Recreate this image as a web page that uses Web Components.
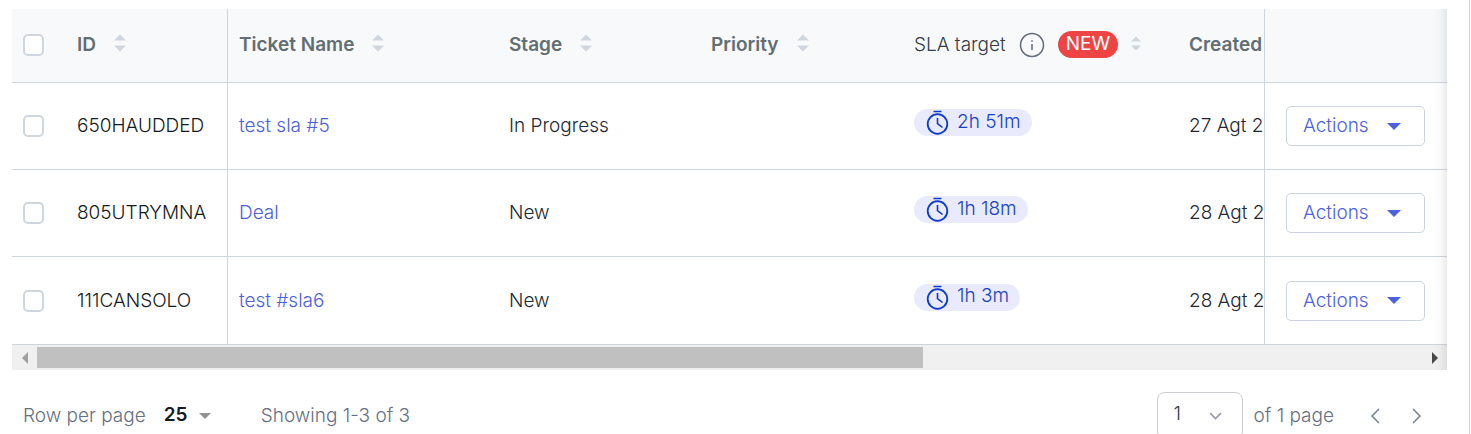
<!DOCTYPE html>
<html lang="en">
<head>
<meta charset="utf-8">
<title>Tickets</title>
<style>
  body {
    margin: 0;
    background: #fff;
    color: #232933;
    font: 300 19px/24px Inter, "Liberation Sans", sans-serif;
    overflow: hidden;
  }
</style>
</head>
<body>
<ticket-panel>
  <ticket-table></ticket-table>
  <scroll-track></scroll-track>
  <table-pager slot="footer"></table-pager>
</ticket-panel>

<script>
const define = (name, html, setup) => {
  const template = document.createElement('template');
  template.innerHTML = html;
  customElements.define(name, class extends HTMLElement {
    constructor() {
      super();
      this.attachShadow({ mode: 'open' }).append(template.content.cloneNode(true));
    }
    connectedCallback() { if (setup) setup(this); }
  });
};

define('ticket-panel', `
  <style>
    :host {
      display: block; box-sizing: border-box; min-height: 100vh;
      margin-right: 1px; padding: 9px 22px 0 12px; border-right: 1px solid #ccd3dc;
    }
    .view { position: relative; }
    .fade {
      position: absolute; top: 0; right: 0; bottom: 0; width: 14px; pointer-events: none;
      background: linear-gradient(to right, rgba(0,0,0,0), rgba(0,0,0,.02) 50%, rgba(0,0,0,.08));
    }
  </style>
  <section class="view"><slot></slot><div class="fade"></div></section>
  <slot name="footer"></slot>`);

define('sort-icon', `
  <style>
    :host { display: inline-block; width: 12px; padding-bottom: 4px; line-height: 0; }
    :host([small]) { width: 10px; padding-bottom: 2px; }
    button { all: unset; display: block; cursor: pointer; }
    svg { display: block; width: 100%; height: auto; }
  </style>
  <button type="button" aria-label="Sort"><svg viewBox="0 0 12 18" fill="#d0d6de">
    <path d="M6 .5 12 6.5H0zM0 11.500h12l-6 6z"/></svg></button>`);

define('info-icon', `
  <style>
    :host { display: block; }
    svg { display: block; }
  </style>
  <svg width="26" height="26" viewBox="0 0 26 26" fill="none" stroke="#626b79" stroke-width="1.500">
    <circle cx="13" cy="13" r="11.500"/><path d="M13 12v6"/><circle cx="13" cy="9" r=".5" stroke-width="1"/></svg>`);

define('new-tag', `
  <style>
    :host {
      display: block; padding: 0 8px 2px; border-radius: 14px;
      background: #ef4444; color: #fff; font-weight: 400; line-height: 25px;
    }
  </style><slot></slot>`);

define('sla-badge', `
  <style>
    :host { display: inline-flex; align-items: center; gap: 8px; height: 27px; box-sizing: border-box;
      padding: 0 11px 0 12px; margin-bottom: 7px; border-radius: 14px; background: #e9eafb; color: #1741c6; }
    svg { flex: none; }
    span { line-height: 24px; padding-bottom: 2px; }
  </style>
  <svg width="23" height="27" viewBox="0 0 23 27" fill="none" stroke="#0b3bcb" stroke-width="1.800">
    <circle cx="11.500" cy="15" r="9.800"/><path d="M7.500 2.500h8M11.500 9v5.500l5 4" stroke-width="1.600"/></svg>
  <span><slot></slot></span>`);

define('action-button', `
  <style>
    :host { display: block; }
    button {
      display: flex; align-items: center; justify-content: space-between; box-sizing: border-box;
      width: 100%; height: 40px; padding: 0 23px 0 16px; border: 1px solid #ccd3df; border-radius: 5px;
      background: #fff; color: #4b61dd; font: inherit; cursor: pointer;
    }
  </style>
  <button type="button"><slot></slot>
    <svg width="14" height="7" viewBox="0 0 14 7" fill="#4b61dd"><path d="M0 0h14L7 7z"/></svg></button>`);

define('ticket-table', `
  <style>
    :host { display: block; }
    table { width: 100%; table-layout: fixed; border-collapse: separate; border-spacing: 0; }
    .c-check { width: 54px; } .c-id { width: 162px; } .c-name { width: 270px; }
    .c-stage { width: 202px; } .c-priority { width: 203px; } .c-sla { width: 275px; } .c-act { width: 183px; }
    th, td {
      box-sizing: border-box; height: 87px; padding: 0 0 0 11px; text-align: left; vertical-align: middle;
      border-bottom: 1px solid #ced5dc; overflow: hidden; white-space: nowrap;
    }
    tbody tr:last-child td { height: 88px; }
    th { height: 74px; padding-bottom: 2px; background: #f8f9fb; color: #616e72; font-weight: 600; }
    th.plain { color: #333b47; font-weight: 300; }
    .id { border-right: 1px solid #ced5dc; }
    td.id { color: #141a22; }
    .act { padding: 0 22px 0 21px; border-left: 1px solid #ced5dc; }
    .head { display: flex; align-items: center; gap: 18px; }
    .head.tight { gap: 13px; }
    a { color: #4b61dd; text-decoration: none; }
    input {
      appearance: none; display: block; box-sizing: border-box; width: 21px; height: 22px; margin: 0;
      border: 2px solid #d0d6de; border-radius: 5px; background: #fff;
    }
  </style>
  <table>
    <colgroup><col class="c-check"><col class="c-id"><col class="c-name"><col class="c-stage"><col class="c-priority">
      <col class="c-sla"><col><col class="c-act"></colgroup>
    <thead><tr>
      <th><input type="checkbox" aria-label="Select all"></th>
      <th class="id"><div class="head">ID<sort-icon></sort-icon></div></th>
      <th><div class="head">Ticket Name<sort-icon></sort-icon></div></th>
      <th><div class="head">Stage<sort-icon></sort-icon></div></th>
      <th><div class="head">Priority<sort-icon></sort-icon></div></th>
      <th class="plain"><div class="head tight">SLA target<info-icon></info-icon><new-tag>NEW</new-tag><sort-icon small></sort-icon></div></th>
      <th>Created</th>
      <th class="act" aria-label="Actions"></th>
    </tr></thead>
    <tbody></tbody>
  </table>`, host => {
  const rows = [
    ['650HAUDDED', 'test sla #5', 'In Progress', '2h 51m', '27 Agt 2'],
    ['805UTRYMNA', 'Deal', 'New', '1h 18m', '28 Agt 2'],
    ['111CANSOLO', 'test #sla6', 'New', '1h 3m', '28 Agt 2'],
  ];
  host.shadowRoot.querySelector('tbody').innerHTML = rows.map(([id, name, stage, sla, created]) => `
    <tr>
      <td><input type="checkbox" aria-label="Select ${id}"></td>
      <td class="id">${id}</td>
      <td><a href="#">${name}</a></td>
      <td>${stage}</td>
      <td></td>
      <td><sla-badge>${sla}</sla-badge></td>
      <td>${created}</td>
      <td class="act"><action-button>Actions</action-button></td>
    </tr>`).join('');
});

define('scroll-track', `
  <style>
    :host { display: grid; grid-template-columns: 25px 1fr 25px; align-items: center; height: 25px; background: #f0f0f0; }
    button { all: unset; display: grid; place-items: center; height: 25px; }
    .thumb { width: 64%; height: 21px; background: #c0c0c0; }
  </style>
  <button type="button" aria-label="Scroll left"><svg width="6" height="12" fill="#a0a0a0"><path d="M6 0v12L0 6z"/></svg></button>
  <div class="thumb"></div>
  <button type="button" aria-label="Scroll right"><svg width="6" height="12" fill="#484848"><path d="M0 0v12l6-6z"/></svg></button>`);

define('table-pager', `
  <style>
    :host { display: flex; justify-content: space-between; align-items: center; margin-top: 22px; padding: 0 25px 0 11px; color: #66707f; }
    .group { display: flex; align-items: center; }
    label { display: flex; align-items: center; }
    .pick { display: grid; align-items: center; }
    .pick > * { grid-area: 1 / 1; }
    .pick svg { justify-self: end; pointer-events: none; }
    select { appearance: none; box-sizing: border-box; margin: 0; border: 0; background: none; font: inherit; color: #141a22; outline: 0; }
    .size { margin: 0 50px 0 18px; }
    .size select { width: 47px; padding: 0 0 2px; font-weight: 600; }
    .page { margin-right: 11px; }
    .page select { width: 86px; height: 48px; padding: 0 0 4px 16px; border: 1px solid #cbced4; border-radius: 8px; color: #333b47; }
    .page svg { margin-right: 21px; }
    .nav { all: unset; display: block; cursor: pointer; line-height: 0; }
    .prev { margin: 0 32px 0 36px; }
  </style>
  <div class="group">
    <label>Row per page
      <span class="pick size"><select><option>25</option></select>
        <svg width="12" height="6" viewBox="0 0 12 6" fill="#929292"><path d="M0 0h12L6 6z"/></svg></span></label>
    <span>Showing 1-3 of 3</span>
  </div>
  <div class="group">
    <span class="pick page"><select aria-label="Page"><option>1</option></select>
      <svg width="13" height="8" viewBox="0 0 13 8" fill="none" stroke="#929aa6" stroke-width="1.600"><path d="M1 1l5.500 5.500L12 1"/></svg></span>
    <span>of 1 page</span>
    <button class="nav prev" type="button" aria-label="Previous page"><svg width="10" height="16" viewBox="0 0 10 16" fill="none" stroke="#7d8797" stroke-width="1.600"><path d="M9 1 2 8l7 7"/></svg></button>
    <button class="nav" type="button" aria-label="Next page"><svg width="10" height="16" viewBox="0 0 10 16" fill="none" stroke="#7d8797" stroke-width="1.600"><path d="M1 1l7 7-7 7"/></svg></button>
  </div>`);
</script>
</body>
</html>
